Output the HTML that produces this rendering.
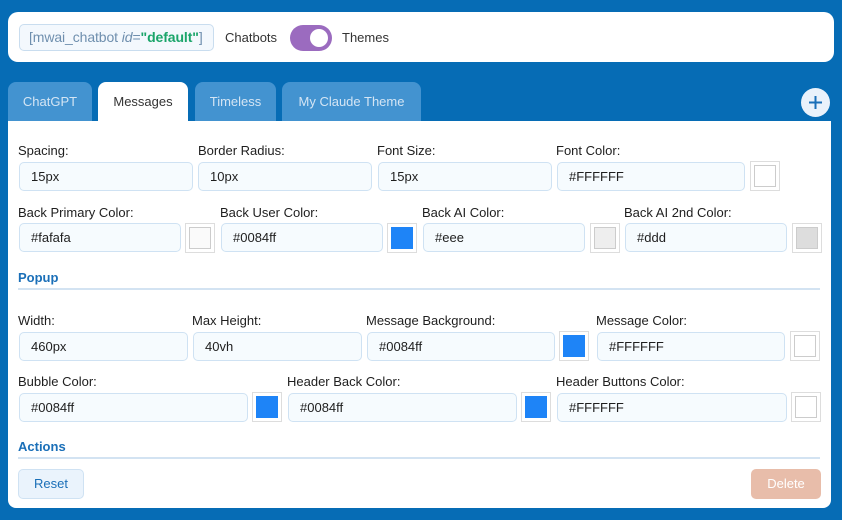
<!DOCTYPE html>
<html><head><style>
*{box-sizing:border-box;margin:0;padding:0}
body{width:842px;height:520px;background:#066cb5;font-family:"Liberation Sans",sans-serif;position:relative;overflow:hidden;font-size:13px;color:#1e1e1e}
.a{position:absolute}
.top{left:8px;top:12px;width:826px;height:50px;background:#fff;border-radius:10px}
.sc{left:19px;top:24px;width:195px;height:27px;border:1.5px solid #c9ddef;background:#f3f8fd;border-radius:5px;color:#6f8fae;font-size:14px;line-height:24px;padding-left:9px;white-space:nowrap;letter-spacing:-0.1px}
.sc b{color:#1aa56a}
.tab{top:82px;height:39px;background:#4393d0;color:#d4e5f4;border-radius:8px 8px 0 0;font-size:13px;line-height:40px;text-align:center}
.panel{left:8px;top:121px;width:823px;height:387px;background:#fff;border-radius:0 0 8px 8px}
.lb{font-size:13px;color:#1e1e1e}
.in{height:29px;border:1px solid #cfe2f3;background:#f6fbfe;border-radius:5px;font-size:13px;line-height:27px;padding-left:11px;color:#1e1e1e}
.sw{width:30px;height:30px;border:1px solid #ddd;background:#fff;padding:3px}
.sw div{width:100%;height:100%;border:1px solid #ccc}
.h{font-weight:bold;color:#1a6fb8;font-size:13px}
.ln{height:2px;background:#d3e3f2;left:18px;width:802px}
</style></head><body>
<div class="a top"></div>
<div class="a sc">[mwai_chatbot <i>id</i>=<b>"default"</b>]</div>
<div class="a" style="left:225px;top:30px;color:#333">Chatbots</div>
<div class="a" style="left:290px;top:25px;width:42px;height:26px;border-radius:13px;background:#9b6bbf"></div>
<div class="a" style="left:310px;top:29px;width:18px;height:18px;border-radius:9px;background:#fff"></div>
<div class="a" style="left:342px;top:30px;color:#333">Themes</div>

<div class="a tab" style="left:8px;width:84px">ChatGPT</div>
<div class="a tab" style="left:98px;width:90px;background:#fff;color:#333">Messages</div>
<div class="a tab" style="left:195px;width:81px">Timeless</div>
<div class="a tab" style="left:282px;width:139px">My Claude Theme</div>
<div class="a" style="left:801px;top:88px;width:29px;height:29px;border-radius:15px;background:#eaf2fb"></div>
<svg class="a" style="left:807px;top:94px" width="17" height="17"><path d="M8.5 2v13M2 8.5h13" stroke="#1a6fb8" stroke-width="2"/></svg>

<div class="a panel"></div>

<div class="a lb" style="left:18px;top:143px">Spacing:</div>
<div class="a lb" style="left:198px;top:143px">Border Radius:</div>
<div class="a lb" style="left:377px;top:143px">Font Size:</div>
<div class="a lb" style="left:556px;top:143px">Font Color:</div>
<div class="a in" style="left:19px;top:162px;width:174px">15px</div>
<div class="a in" style="left:198px;top:162px;width:174px">10px</div>
<div class="a in" style="left:378px;top:162px;width:174px">15px</div>
<div class="a in" style="left:557px;top:162px;width:188px">#FFFFFF</div>
<div class="a sw" style="left:750px;top:161px"><div style="background:#fff"></div></div>

<div class="a lb" style="left:18px;top:205px">Back Primary Color:</div>
<div class="a lb" style="left:220px;top:205px">Back User Color:</div>
<div class="a lb" style="left:422px;top:205px">Back AI Color:</div>
<div class="a lb" style="left:624px;top:205px">Back AI 2nd Color:</div>
<div class="a in" style="left:19px;top:223px;width:162px">#fafafa</div>
<div class="a sw" style="left:185px;top:223px"><div style="background:#fafafa"></div></div>
<div class="a in" style="left:221px;top:223px;width:162px">#0084ff</div>
<div class="a sw" style="left:387px;top:223px"><div style="background:#1e84f7;border-color:#1e84f7"></div></div>
<div class="a in" style="left:423px;top:223px;width:162px">#eee</div>
<div class="a sw" style="left:590px;top:223px"><div style="background:#eee"></div></div>
<div class="a in" style="left:625px;top:223px;width:162px">#ddd</div>
<div class="a sw" style="left:792px;top:223px"><div style="background:#ddd"></div></div>

<div class="a h" style="left:18px;top:270px">Popup</div>
<div class="a ln" style="top:288px"></div>

<div class="a lb" style="left:18px;top:313px">Width:</div>
<div class="a lb" style="left:192px;top:313px">Max Height:</div>
<div class="a lb" style="left:366px;top:313px">Message Background:</div>
<div class="a lb" style="left:596px;top:313px">Message Color:</div>
<div class="a in" style="left:19px;top:332px;width:169px">460px</div>
<div class="a in" style="left:193px;top:332px;width:169px">40vh</div>
<div class="a in" style="left:367px;top:332px;width:188px">#0084ff</div>
<div class="a sw" style="left:559px;top:331px"><div style="background:#1e84f7;border-color:#1e84f7"></div></div>
<div class="a in" style="left:597px;top:332px;width:188px">#FFFFFF</div>
<div class="a sw" style="left:790px;top:331px"><div style="background:#fff"></div></div>

<div class="a lb" style="left:18px;top:374px">Bubble Color:</div>
<div class="a lb" style="left:287px;top:374px">Header Back Color:</div>
<div class="a lb" style="left:556px;top:374px">Header Buttons Color:</div>
<div class="a in" style="left:19px;top:393px;width:229px">#0084ff</div>
<div class="a sw" style="left:252px;top:392px"><div style="background:#1e84f7;border-color:#1e84f7"></div></div>
<div class="a in" style="left:288px;top:393px;width:229px">#0084ff</div>
<div class="a sw" style="left:521px;top:392px"><div style="background:#1e84f7;border-color:#1e84f7"></div></div>
<div class="a in" style="left:557px;top:393px;width:230px">#FFFFFF</div>
<div class="a sw" style="left:791px;top:392px"><div style="background:#fff"></div></div>

<div class="a h" style="left:18px;top:439px">Actions</div>
<div class="a ln" style="top:457px"></div>

<div class="a" style="left:18px;top:469px;width:66px;height:30px;border:1px solid #cfe2f3;background:#eaf3fc;border-radius:5px;color:#1a6fb8;text-align:center;line-height:28px">Reset</div>
<div class="a" style="left:751px;top:469px;width:70px;height:30px;background:#e8bdaa;border-radius:5px;color:#fff;text-align:center;line-height:30px">Delete</div>
</body></html>
